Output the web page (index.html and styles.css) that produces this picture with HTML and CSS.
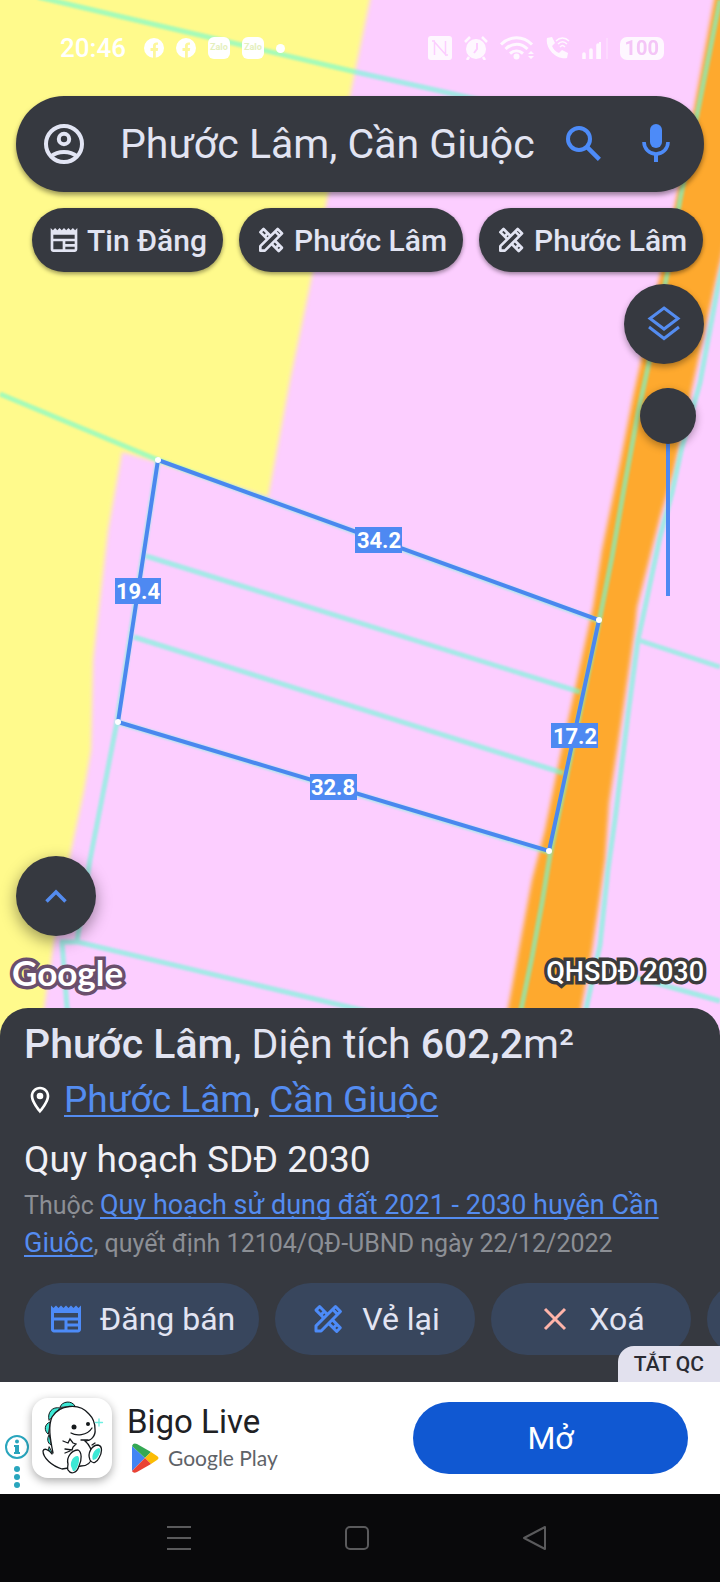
FILE: index.html
```html
<!DOCTYPE html>
<html lang="vi">
<head>
<meta charset="utf-8">
<meta name="viewport" content="width=device-width, initial-scale=1">
<title>Phước Lâm, Cần Giuộc</title>
<link rel="stylesheet" href="styles.css">
</head>
<body>
<svg width="0" height="0" class="defs" aria-hidden="true">
  <symbol id="i-news" viewBox="0 0 24 24"><path fill="currentColor" d="M22 3l-1.67 1.67L18.67 3 17 4.67 15.33 3l-1.66 1.67L12 3l-1.67 1.67L8.67 3 7 4.67 5.33 3 3.67 4.67 2 3v16c0 1.1.9 2 2 2h16c1.1 0 2-.9 2-2V3zM11 19H4v-6h7v6zm9 0h-7v-2h7v2zm0-4h-7v-2h7v2zm0-4H4V8h16v3z"/></symbol>
  <symbol id="i-design" viewBox="0 0 24 24"><g fill="none" stroke="currentColor" stroke-width="2" stroke-linejoin="round"><path d="M4 20v-3.400L17 3.700l3.300 3.300L7.400 20z"/><path d="M9.200 11.300L4 6.100 6.400 3.700l5.100 5.100M15 12.600l5.200 5.200-2.400 2.500-5.200-5.200M9.600 6.900L7.700 8.800M18.100 15.400l-1.900 1.900M15.200 5.700l3.200 3.200"/></g></symbol>
</svg>
<div class="screen">
  <main class="map-view">
    <svg class="map" viewBox="0 0 720 1040" preserveAspectRatio="xMidYMin slice" role="img" aria-label="Bản đồ quy hoạch">
      <defs><filter id="soft" color-interpolation-filters="sRGB"><feGaussianBlur stdDeviation="2"/></filter><filter id="line-soft" color-interpolation-filters="sRGB"><feGaussianBlur stdDeviation="0.800"/></filter></defs>
      <rect width="720" height="1040" fill="#fcceff"/>
      <g filter="url(#soft)">
        <path fill="#fffa8c" d="M-10-10H372L350 95 328 195 310 285 290 380 268 497 158 462 122 452 108 530 98 615 93 660 91 750 84 790 70 855 54 940 44 1008 40 1050H-10z"/>
        <path fill="#fea92e" d="M716-10L692 120 676 200 660 275 633 397 620 463 602 550 593 607 577 680 560 757 545 830 532 880 522 933 509 1003 500 1050H574L582 1003 592 950 605 860 609 803 623 710 635 627 637 607 660 517 673 473 693 383 717 275 730 220V-10z"/>
      </g>
      <g class="parcels" filter="url(#line-soft)">
        <path d="M38-3L360 73l160 36M0 394l158 66 441 161M158 460l-41 262-27 138-13 81M60 942h18l262 63 60 14M62 942l5 66 20 24M146 556l434 136M134 637l429 136M117 722l432 130"/>
        <path d="M720 0L698 110 680 200 667 275 648 367 638 413 625 483 612 557 600 617 550 855 542 903 532 957 522 1005 514 1040M726 250L718 287 700 383 682 447 672 493 660 537 643 617 638 640 628 715 615 820 608 870 600 945 587 1005 580 1040M638 640l82 27M620 973l100 28"/>
      </g>
      <path class="plot" d="M158 460L599 620 549 851 118 722z"/>
      <g fill="#fff"><circle cx="158" cy="460" r="3"/><circle cx="599" cy="620" r="3"/><circle cx="549" cy="851" r="3"/><circle cx="118" cy="722" r="3"/></g>
      <g fill="#4e89f2"><rect x="355" y="527" width="47" height="26"/><rect x="115" y="578" width="46" height="26"/><rect x="310" y="774" width="47" height="26"/><rect x="551" y="723" width="47" height="25"/></g>
      <g class="lengths"><text x="379" y="548">34.2</text><text x="138" y="599">19.4</text><text x="333" y="795">32.8</text><text x="575" y="744">17.2</text></g>
    </svg>

    <div class="status">
      <span class="clock">20:46</span>
      <svg width="20" height="20" viewBox="0 0 20 20"><circle cx="10" cy="10" r="10" fill="#fff"/><path d="M9 20v-7H6.500v-3H9V8c0-2.500 1.500-4 5-3.500v2.300c-1.800 0-2.200.3-2.200 1.500V10h2.400l-.5 3h-1.900v7z" fill="#fdf79c"/></svg>
      <svg width="20" height="20" viewBox="0 0 20 20"><circle cx="10" cy="10" r="10" fill="#fff"/><path d="M9 20v-7H6.500v-3H9V8c0-2.500 1.500-4 5-3.500v2.300c-1.800 0-2.200.3-2.200 1.500V10h2.400l-.5 3h-1.900v7z" fill="#fdf79c"/></svg>
      <span class="zalo">Zalo</span>
      <span class="zalo">Zalo</span>
      <span class="dot"></span>
      <span class="status-right">
        <svg width="24" height="24" viewBox="0 0 24 24"><rect width="24" height="24" rx="3" fill="#fff"/><path d="M6.500 19V6l11 12.500V5M4 5h3M17 19h3" fill="none" stroke="#fcceff" stroke-width="1.500"/></svg>
        <svg width="24" height="24" viewBox="0 0 24 24"><circle cx="12" cy="13" r="10" fill="#fff"/><path d="M1 6l5-5M23 6l-5-5M5 21l-2 3M19 21l2 3" stroke="#fff" stroke-width="2.500"/><path d="M13 7v6l-3 4" fill="none" stroke="#fcceff" stroke-width="2"/></svg>
        <svg width="34" height="24" viewBox="0 0 34 24"><g fill="none" stroke="#fff" stroke-width="3"><path d="M1 8.500c9-9 22-9 31 0M5.500 13c7-6.500 15.500-6.500 22 0M10 17.500c4-3.500 9-3.500 13 0"/></g><circle cx="16.500" cy="20.500" r="3" fill="#fff"/><path d="M28 18l3-3 3 3zM28 20h6l-3 3z" fill="#fff"/></svg>
        <svg width="24" height="24" viewBox="0 0 24 24"><path d="M1 2l5-1 3 6-3 3c1.500 3.500 4 6 7 7l3-3 6 3-1 5C10 24-1 12 1 2z" fill="#fff"/><path d="M10 5c4-4 9-4 13 0M12 8c3-3 6-3 9 0M14 11c2-2 3-2 5 0" fill="none" stroke="#fff" stroke-width="1.500"/></svg>
        <svg width="26" height="22" viewBox="0 0 26 22"><path d="M2 22v-5M9 22V13M16 22V8" stroke="#fff" stroke-width="3.500" stroke-linecap="round"/><path d="M18 22V5" stroke="#fff" stroke-width="2"/><path d="M25 22V1" stroke="#fff" opacity=".5"/></svg>
        <span class="battery">100</span>
      </span>
    </div>

    <form class="search" role="search">
      <button class="plain" type="button" aria-label="Tài khoản"><svg width="48" height="48" viewBox="0 0 24 24" fill="none" stroke="#e2e5f4" stroke-width="2"><circle cx="12" cy="12" r="9"/><circle cx="12" cy="9.500" r="2.600"/><path d="M5.500 18.200c3.500-2.900 9.500-2.900 13 0"/></svg></button>
      <input class="query" type="text" value="Phước Lâm, Cần Giuộc" aria-label="Tìm kiếm">
      <button class="plain" type="submit" aria-label="Tìm"><svg width="48" height="48" viewBox="0 0 24 24" fill="none" stroke="#4d8bf8" stroke-width="2"><circle cx="9.500" cy="9.500" r="5.500"/><path d="M13.700 13.700l6 6" stroke-width="2.200"/></svg></button>
      <button class="plain" type="button" aria-label="Giọng nói"><svg width="48" height="48" viewBox="0 0 24 24" fill="none" stroke="#4d8bf8"><rect x="9" y="2" width="6" height="12" rx="3" fill="#4d8bf8" stroke="none"/><path d="M6 11a6 6 0 0 0 12 0" stroke-width="1.800"/><path d="M12 17v4" stroke-width="2"/></svg></button>
    </form>

    <nav class="chips">
      <button class="chip"><svg width="32" height="32"><use href="#i-news"/></svg>Tin Đăng</button>
      <button class="chip"><svg width="32" height="32"><use href="#i-design"/></svg>Phước Lâm</button>
      <button class="chip"><svg width="32" height="32"><use href="#i-design"/></svg>Phước Lâm</button>
    </nav>

    <div class="tools">
      <button class="round" aria-label="Lớp bản đồ"><svg width="40" height="40" viewBox="0 0 40 40" fill="none" stroke="#548cf0" stroke-width="3"><path d="M20 4L34 14.500 20 25 6 14.500z"/><path d="M5 23l15 11.500L35 23"/></svg></button>
      <input class="opacity" type="range" min="0" max="100" value="100" aria-label="Độ mờ lớp quy hoạch">
    </div>

    <div class="map-foot">
      <button class="round high" aria-label="Mở rộng"><svg width="40" height="40" viewBox="0 0 40 40" fill="none" stroke="#548cf0" stroke-width="3.500"><path d="M10.500 25.500L20 16l9.500 9.500"/></svg></button>
      <div class="credits"><span class="google">Google</span><span class="layer">QHSDĐ 2030</span></div>
    </div>
  </main>

  <section class="sheet">
    <h1 class="title"><b>Phước Lâm</b>, Diện tích <b>602,2</b>m²</h1>
    <p class="place"><svg width="32" height="32" viewBox="0 0 24 24"><path fill="#fff" d="M12 2C8.130 2 5 5.130 5 9c0 5.250 7 13 7 13s7-7.750 7-13c0-3.870-3.130-7-7-7zM7 9c0-2.760 2.240-5 5-5s5 2.240 5 5c0 2.880-2.880 7.190-5 9.880C9.920 16.210 7 11.850 7 9z"/><circle cx="12" cy="9" r="2.500" fill="#fff"/></svg><span><a href="#">Phước Lâm</a>, <a href="#">Cần Giuộc</a></span></p>
    <h2 class="plan">Quy hoạch SDĐ 2030</h2>
    <p class="detail">Thuộc <a href="#">Quy hoạch sử dụng đất 2021 - 2030 huyện Cần Giuộc</a>, quyết định 12104/QĐ-UBND ngày 22/12/2022</p>
    <div class="actions">
      <button class="action wide"><svg width="36" height="36"><use href="#i-news"/></svg>Đăng bán</button>
      <button class="action"><svg width="36" height="36"><use href="#i-design"/></svg>Vẻ lại</button>
      <button class="action"><svg width="36" height="36" viewBox="0 0 36 36"><path d="M8 8l20 20M28 8L8 28" stroke="#ffb4a9" stroke-width="3"/></svg>Xoá</button>
      <button class="action" aria-label="Thêm"></button>
    </div>
    <button class="hide-ad">TẮT QC</button>
  </section>

  <aside class="ad">
    <div class="ad-info">
      <svg width="32" height="56" viewBox="0 0 32 56"><circle cx="17" cy="15" r="11" fill="none" stroke="#29a5bd" stroke-width="2"/><g fill="#29a5bd"><circle cx="17" cy="9.500" r="2"/><path d="M14 13h5v7h1v2h-6v-2h1v-5h-1z"/><circle cx="17" cy="37" r="3"/><circle cx="17" cy="45" r="3"/><circle cx="17" cy="53" r="3"/></g></svg>
    </div>
    <svg class="ad-icon" viewBox="0 0 80 80" fill="none" stroke="#15191c" stroke-width="1.300" stroke-linecap="round">
      <g fill="#3ce8d5" stroke-width="1"><path d="M28 9c2-6 12-7 15-1z"/><path d="M17 22c-2-7 3-14 11-12z"/><path d="M16 36c-4-3-4-10 2-12z"/><path d="M19 47c-4-2-4-7-2-10z"/><path d="M20 55c-3 0-4-3-3-6z"/></g>
      <path fill="#fff" d="M21 55C18 40 16 28 20 19 27 7 47 4 57 16c4 4 6 9 6 15 1 7-4 12-10 12 5 4 7 11 7 16-1 6-5 9-11 9L30 71C20 68 11 60 11 53c1-3 6-2 9 3"/>
      <path fill="#fff" d="M58 62c-3-7 2-15 8-15 5 1 4 8 1 13-2 4-6 7-9 2z"/><path fill="#3ce8d5" stroke="none" d="M61 62c-2-4 1-11 6-12 3 1 0 8-3 11z"/>
      <path fill="#fff" d="M36 66c-2-7 4-14 10-14 4 2 4 10 1 16-2 7-8 9-11 4-1-2 0-4 0-6z"/><path fill="#3ce8d5" stroke="none" d="M39 68c-1-5 3-11 7-10 3 3-1 16-5 15z"/>
      <path d="M39 35c5 3 16 3 21-5M49 42l7 0M31 43l5 2 2-4 3 4 3 1-3 3-1 3-7-1M33 55l5-2M60 47l3-2"/>
      <g fill="#15191c" stroke="none"><circle cx="42" cy="29" r="2.500"/><circle cx="56" cy="26" r="2"/></g><path stroke="#6df0e2" d="M67 21v7M63.500 24.500h7"/>
    </svg>
    <div class="ad-copy">
      <div class="ad-name">Bigo Live</div>
      <div class="ad-store"><svg width="28" height="30" viewBox="0 0 28 30"><path fill="#4285f4" d="M1 3v25l13-13z"/><path fill="#34a853" d="M1 3c1-3 3-3 5-2l14 8-6 6z"/><path fill="#fbbc04" d="M14 15l6-6 6 4c2 1 2 3 0 4l-6 4z"/><path fill="#ea4335" d="M1 28c1 2 3 2 5 1l14-8-6-6z"/></svg>Google Play</div>
    </div>
    <button class="open">Mở</button>
  </aside>

  <nav class="system">
    <button class="plain" aria-label="Gần đây"><svg width="28" height="28" viewBox="0 0 28 28" stroke="#5a5a5c" stroke-width="2"><path d="M2 3h24M2 14h24M2 25h24"/></svg></button>
    <button class="plain" aria-label="Trang chủ"><svg width="28" height="28" viewBox="0 0 28 28" fill="none" stroke="#5a5a5c" stroke-width="2"><rect x="3" y="3" width="22" height="22" rx="4"/></svg></button>
    <button class="plain" aria-label="Quay lại"><svg width="28" height="28" viewBox="0 0 28 28" fill="none" stroke="#5a5a5c" stroke-width="2" stroke-linejoin="round"><path d="M3 14L24 3v22z"/></svg></button>
  </nav>
</div>
</body>
</html>
```
FILE: styles.css
```css
* { box-sizing: border-box; }
body { margin: 0; font-family: Roboto, "Noto Sans", sans-serif; color: #e2e4f2; background: #09090b; }
button { font: inherit; color: inherit; border: 0; cursor: pointer; }
svg { flex: none; display: block; }
h1, h2, p { margin: 0; font-weight: 400; }
b { font-weight: 500; }
a { color: #548cf0; text-decoration-thickness: 2px; text-underline-offset: 3px; text-decoration-skip-ink: none; }
.defs { position: absolute; }
.screen { min-height: 100vh; display: flex; flex-direction: column; }
.plain { display: flex; align-items: center; justify-content: center; padding: 0; background: none; }

.map-view { position: relative; flex: 1; display: flex; flex-direction: column; padding-bottom: 32px; overflow: hidden; isolation: isolate; }
.map { position: absolute; inset: 0; width: 100%; height: 100%; z-index: -1; }
.parcels { fill: none; stroke: #6bfcd7; stroke-opacity: .6; stroke-width: 5px; }
.plot { fill: none; stroke: #4a87ef; stroke-width: 4px; }
.lengths { font-size: 22px; font-weight: 700; fill: #fff; text-anchor: middle; }

.status { display: flex; align-items: center; gap: 12px; height: 96px; padding: 0 56px 0 60px; color: #fff; }
.clock { font-size: 26px; font-weight: 500; margin-right: 6px; }
.zalo { width: 22px; height: 22px; border-radius: 6px; background: #fff; color: #e4efbd; font-size: 9px; font-weight: 700; line-height: 20px; text-align: center; }
.dot { width: 9px; height: 9px; border-radius: 50%; background: #fff; }
.status-right { display: flex; align-items: center; gap: 12px; margin-left: auto; opacity: .85; }
.battery { padding: 0 5px; border-radius: 7px; background: #fff; color: #f3c4f6; font-size: 20px; line-height: 23px; font-weight: 700; }

.search { display: flex; align-items: center; gap: 24px; height: 96px; margin: 0 16px; padding: 0 24px; border-radius: 48px; background: #363940; box-shadow: 0 3px 5px #0006; }
.query { flex: 1; min-width: 0; padding: 0; margin-left: 8px; border: 0; outline: 0; background: none; font: inherit; font-size: 41px; color: inherit; }
.chips { display: flex; gap: 16px; padding: 16px 16px 12px 32px; overflow: hidden; }
.chip { flex: none; display: flex; align-items: center; gap: 7px; height: 64px; padding: 0 16px; border-radius: 32px; background: #363940; font-size: 30px; font-weight: 500; box-shadow: 0 2px 4px #0006; white-space: nowrap; }

.tools { display: flex; flex-direction: column; align-items: flex-end; gap: 24px; padding: 0 16px; }
.round { display: flex; align-items: center; justify-content: center; width: 80px; height: 80px; padding: 0; border-radius: 50%; background: #363940; box-shadow: 0 3px 6px #0005; }
.high { box-shadow: 0 5px 16px #0006; }
.opacity { appearance: none; writing-mode: vertical-lr; direction: rtl; width: 56px; height: 208px; margin: 0 8px 0 0; background: linear-gradient(#4e89f2, #4e89f2) center / 4px 100% no-repeat; }
.opacity::-webkit-slider-thumb { appearance: none; width: 56px; height: 56px; border-radius: 50%; background: #363940; box-shadow: 0 3px 8px #0005; }

.map-foot { margin-top: auto; }
.map-foot .round { margin-left: 16px; }
.credits { display: flex; justify-content: space-between; align-items: center; height: 72px; padding: 0 16px 0 12px; color: #fff; }
.google, .layer { paint-order: stroke fill; }
.google { font-family: Lato, sans-serif; font-size: 35px; font-weight: 700; -webkit-text-stroke: 7px #6a4f6c; }
.layer { font-size: 27px; font-weight: 500; -webkit-text-stroke: 7px #3c3c3c; }

.sheet { position: relative; margin-top: -32px; padding: 12px 24px 27px; border-radius: 28px 28px 0 0; background: #363940; overflow: hidden; }
.title { font-size: 41px; line-height: 48px; }
.place { display: flex; align-items: center; gap: 8px; margin: 8px 0 0; font-size: 37px; line-height: 48px; }
.plan { margin-top: 12px; font-size: 37px; line-height: 48px; color: #f0f0f6; }
.detail { margin-top: 3px; font-size: 25px; line-height: 38px; color: #8c8f95; }
.detail a { font-size: 27px; line-height: 1; }
.actions { display: flex; gap: 16px; margin: 20px -24px 0 0; overflow: hidden; }
.action { flex: none; display: flex; align-items: center; justify-content: center; gap: 16px; width: 200px; height: 72px; padding: 0; border-radius: 36px; background: #38465d; font-size: 32px; }
.action svg { color: #4d8bf8; }
.wide { width: 235px; }
.hide-ad { position: absolute; right: 0; bottom: 0; height: 36px; padding: 0 16px; border-radius: 16px 0 0 0; background: #e2e1ee; color: #2a2b33; font-size: 21px; font-weight: 500; }

.ad { display: flex; align-items: center; height: 112px; padding-right: 32px; background: #fff; }
.ad-info { align-self: flex-end; padding-bottom: 6px; }
.ad-icon { width: 80px; height: 80px; border-radius: 16px; background: #fff; box-shadow: 0 3px 10px #0005; }
.ad-copy { flex: 1; margin-left: 15px; color: #202124; }
.ad-name { font-size: 33px; line-height: 40px; }
.ad-store { display: flex; align-items: center; gap: 9px; margin-left: 4px; font-family: Lato, sans-serif; font-size: 21px; line-height: 32px; color: #5f6368; }
.open { flex: none; width: 275px; height: 72px; border-radius: 36px; background: #1058d2; color: #fff; font-size: 32px; }

.system { display: grid; grid-template-columns: repeat(3, 1fr); height: 88px; padding: 0 96px 0 90px; background: #09090b; }
```
